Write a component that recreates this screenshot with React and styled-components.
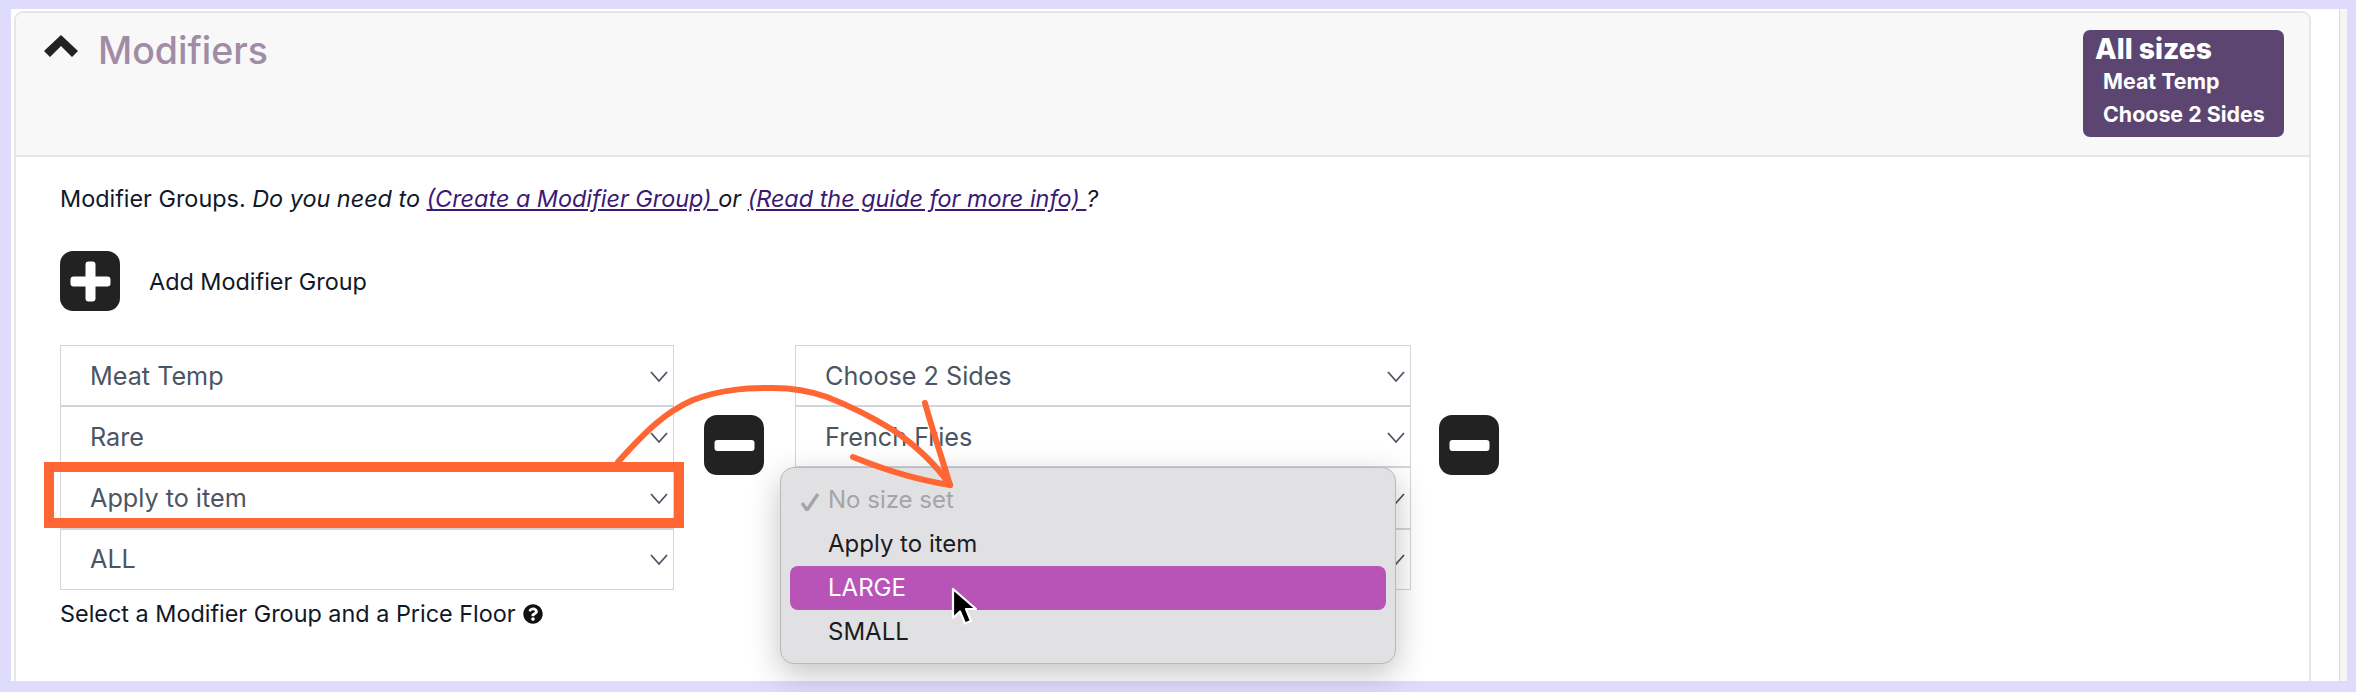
import React from "react";
import styled, { createGlobalStyle } from "styled-components";
import { FaQuestionCircle } from "react-icons/fa";

const GlobalStyle = createGlobalStyle`
  html, body {
    margin: 0;
    padding: 0;
    background: #dedbfd;
    overflow: hidden;
  }
  * {
    box-sizing: border-box;
  }
`;

const Page = styled.div`
  position: relative;
  width: 2356px;
  height: 692px;
  padding: 9px 9px 11px 11px;
  font-family: Inter, "Noto Sans", sans-serif;
  color: #111827;
`;

const Frame = styled.div`
  display: flex;
  height: 100%;
  background: #fff;
  overflow: hidden;
`;

const CardColumn = styled.div`
  flex: 1;
  padding: 2px 28px 0 3px;
`;

const Scrollbar = styled.div`
  width: 8px;
  background: #f5f5f5;
  border-left: 1px solid #dcdcdc;
`;

const Card = styled.div`
  height: 700px;
  border: 2px solid #e6e6e6;
  border-radius: 9px 9px 0 0;
`;

const CardHeader = styled.div`
  display: flex;
  justify-content: space-between;
  align-items: flex-start;
  height: 144px;
  padding: 17px 25px 0 28px;
  background: #f8f8f8;
  border-bottom: 2px solid #e6e6e6;
  border-radius: 7px 7px 0 0;
`;

const HeaderTitle = styled.div`
  display: flex;
  align-items: flex-start;
  gap: 20px;
`;

const Chevron = styled.svg`
  width: 34px;
  height: 22px;
  margin-top: 5px;
  fill: #222;
`;

const Title = styled.h2`
  margin: -4px 0 0;
  font-size: 37.5px;
  line-height: 50px;
  font-weight: 500;
  color: #a08ca5;
`;

const SizeBadge = styled.div`
  width: 201px;
  height: 107px;
  padding: 3px 12px;
  background: #5c4570;
  border-radius: 7px;
  color: #fff;
  font-weight: 700;
`;

const BadgeTitle = styled.div`
  font-size: 28.2px;
  font-weight: 800;
  line-height: 32px;
`;

const BadgeItem = styled.div`
  padding-left: 8px;
  font-size: 21.4px;
  font-weight: 700;
  line-height: 33px;
`;

const CardBody = styled.div`
  padding: 27px 44px 0;
`;

const Intro = styled.p`
  margin: 0;
  font-size: 23.4px;
  line-height: 30px;
`;

const GuideLink = styled.a`
  color: #3b1a73;
  font-style: italic;
  text-decoration: underline;
`;

const AddRow = styled.div`
  display: flex;
  align-items: center;
  gap: 29px;
  margin-top: 37px;
  font-size: 23.4px;
`;

const IconButton = styled.button`
  display: flex;
  align-items: center;
  justify-content: center;
  flex: none;
  width: 60px;
  height: 60px;
  margin-top: ${(p) => p.$offset || 0}px;
  padding: 0;
  background: #222;
  border: 0;
  border-radius: 13px;
`;

const Glyph = styled.svg`
  width: 41px;
  height: 41px;
  fill: #fff;
`;

const Groups = styled.div`
  display: flex;
  margin-top: 34px;
`;

const Group = styled.div`
  display: flex;
  align-items: flex-start;
  gap: ${(p) => p.$gap}px;
  margin-right: 31px;
`;

const Selects = styled.div`
  display: flex;
  flex-direction: column;
  width: ${(p) => p.$width}px;
`;

const Select = styled.div`
  display: flex;
  align-items: center;
  justify-content: space-between;
  height: 61.2px;
  padding: 0 2px 0 29px;
  background: #fff;
  border: 1px solid #d1d5db;
  font-size: 25.2px;
  color: #4b5563;
`;

const Caret = styled.svg`
  width: 24px;
  height: 24px;
  fill: none;
  stroke: #4b5563;
  stroke-width: 1.8;
`;

const Help = styled.div`
  display: flex;
  align-items: center;
  gap: 7px;
  margin-top: 7px;
  font-size: 23.4px;
  line-height: 34px;
  svg {
    width: 20px;
    height: 20px;
    color: #111;
  }
`;

const Popover = styled.div`
  position: absolute;
  left: 780px;
  top: 467px;
  width: 616px;
  height: 197px;
  padding: 10px 9px;
  background: #e1e1e3;
  border: 1px solid #b9b9bb;
  border-radius: 14px;
  box-shadow: 0 10px 32px rgba(0, 0, 0, 0.24);
`;

const Option = styled.div`
  position: relative;
  height: 44px;
  padding-left: 38px;
  border-radius: 8px;
  font-size: 24px;
  line-height: 44px;
  color: ${(p) => (p.$disabled ? "#a5a5a8" : p.$active ? "#fff" : "#1c1c1e")};
  background: ${(p) => (p.$active ? "#b854b8" : "transparent")};
`;

const Check = styled.svg`
  position: absolute;
  left: 11px;
  top: 15px;
  width: 18px;
  height: 18px;
  fill: none;
  stroke: #a5a5a8;
  stroke-width: 3.4;
`;

const Cursor = styled.svg`
  position: absolute;
  left: 949px;
  top: 587px;
  width: 30px;
  height: 42px;
`;

const Highlight = styled.div`
  position: absolute;
  left: 44px;
  top: 462px;
  width: 640px;
  height: 66px;
  border: 10px solid #ff6633;
`;

const Scribble = styled.svg`
  position: absolute;
  left: 0;
  top: 0;
  width: 2356px;
  height: 692px;
  fill: none;
  stroke: #ff6633;
  stroke-width: 6;
  stroke-linecap: round;
  stroke-linejoin: round;
  pointer-events: none;
`;

const DownCaret = () => (
  <Caret viewBox="0 0 24 24">
    <path d="M4 8l8 9 8-9" />
  </Caret>
);

const SelectStack = ({ width, values }) => (
  <Selects $width={width}>
    {values.map((value, i) => (
      <Select key={i}>
        <span>{value}</span>
        <DownCaret />
      </Select>
    ))}
  </Selects>
);

const MinusButton = () => (
  <IconButton $offset={70}>
    <Glyph viewBox="0 0 41 41">
      <rect x="0.5" y="15" width="40" height="11" rx="3" />
    </Glyph>
  </IconButton>
);

export default function App() {
  return (
    <Page>
      <GlobalStyle />
      <Frame>
        <CardColumn>
          <Card>
            <CardHeader>
              <HeaderTitle>
                <Chevron viewBox="0 0 34 22">
                  <polygon points="17,0 34,16 28,22 17,11 6,22 0,16" />
                </Chevron>
                <Title>Modifiers</Title>
              </HeaderTitle>
              <SizeBadge>
                <BadgeTitle>All sizes</BadgeTitle>
                <BadgeItem>Meat Temp</BadgeItem>
                <BadgeItem>Choose 2 Sides</BadgeItem>
              </SizeBadge>
            </CardHeader>
            <CardBody>
              <Intro>
                Modifier Groups. <em>Do you need to </em>
                <GuideLink href="#">(Create a Modifier Group) </GuideLink>
                <em> or </em>
                <GuideLink href="#">(Read the guide for more info) </GuideLink>
                <em> ?</em>
              </Intro>
              <AddRow>
                <IconButton>
                  <Glyph viewBox="0 0 41 41">
                    <path d="M15.5 3.500a3 3 0 0 1 3-3h4a3 3 0 0 1 3 3v12h12a3 3 0 0 1 3 3v4a3 3 0 0 1-3 3h-12v12a3 3 0 0 1-3 3h-4a3 3 0 0 1-3-3v-12h-12a3 3 0 0 1-3-3v-4a3 3 0 0 1 3-3h12z" />
                  </Glyph>
                </IconButton>
                Add Modifier Group
              </AddRow>
              <Groups>
                <Group $gap={30}>
                  <SelectStack
                    width={614}
                    values={["Meat Temp", "Rare", "Apply to item", "ALL"]}
                  />
                  <MinusButton />
                </Group>
                <Group $gap={28}>
                  <SelectStack
                    width={616}
                    values={["Choose 2 Sides", "French Fries", "", ""]}
                  />
                  <MinusButton />
                </Group>
              </Groups>
              <Help>
                Select a Modifier Group and a Price Floor
                <FaQuestionCircle />
              </Help>
            </CardBody>
          </Card>
        </CardColumn>
        <Scrollbar />
      </Frame>

      <Highlight />

      <Popover>
        <Option $disabled>
          <Check viewBox="0 0 18 18">
            <path d="M1 10l5 7L17 1" />
          </Check>
          No size set
        </Option>
        <Option>Apply to item</Option>
        <Option $active>LARGE</Option>
        <Option>SMALL</Option>
      </Popover>

      <Cursor viewBox="0 0 30 42">
        <path
          d="M4 2v29l7-6.500 5 12 6-2.500-5-12h10z"
          fill="#000"
          stroke="#fff"
          strokeWidth="2.2"
          strokeLinejoin="round"
        />
      </Cursor>

      <Scribble viewBox="0 0 2356 692">
        <path d="M618 462C645 432 665 412 693 400C722 389 748 388 773 388C792 388 810 391 827 397C850 406 872 417 893 430C918 447 936 465 950 485" />
        <path d="M925 403C933 432 942 458 950 485" />
        <path d="M853 457C885 470 918 480 950 485" />
      </Scribble>
    </Page>
  );
}
